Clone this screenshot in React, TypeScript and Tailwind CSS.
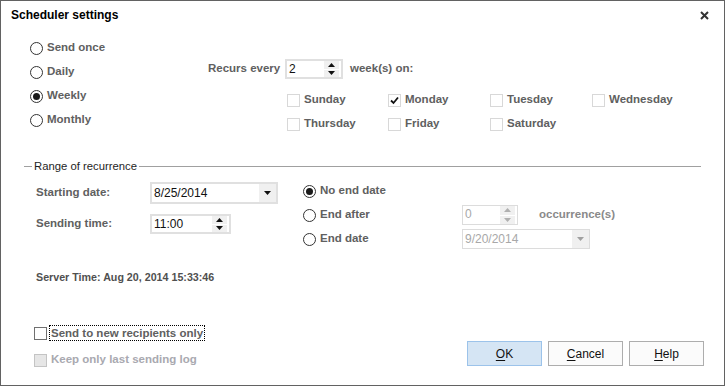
import React from "react";

const label = "font-['Liberation_Sans',Arial,sans-serif] font-bold text-[11.5px] text-[#606060]";

function Radio({ checked, text }: { checked?: boolean; text: string }) {
  return (
    <div className="flex h-[24px] items-center">
      <span className="flex h-[13px] w-[13px] items-center justify-center rounded-full border border-[#333333] bg-white">
        {checked && <span className="h-[7px] w-[7px] rounded-full bg-[#1a1a1a]" />}
      </span>
      <span className={`ml-[4px] ${label}`}>{text}</span>
    </div>
  );
}

function DayBox({ checked, text }: { checked?: boolean; text: string }) {
  return (
    <div className="flex h-[24px] items-center">
      <span className="flex h-[13px] w-[13px] items-center justify-center border border-[#d8d8d8] bg-white">
        {checked && (
          <svg width="9" height="9" viewBox="0 0 9 9">
            <path d="M1 4.5 L3.5 7 L8 1.5" fill="none" stroke="#111" strokeWidth="1.8" />
          </svg>
        )}
      </span>
      <span className={`ml-[4px] ${label}`}>{text}</span>
    </div>
  );
}

function Arrow({ up, color = "#111" }: { up?: boolean; color?: string }) {
  return (
    <svg width="7" height="4" viewBox="0 0 7 4">
      <path d={up ? "M0 4 L3.5 0 L7 4 Z" : "M0 0 L7 0 L3.5 4 Z"} fill={color} />
    </svg>
  );
}

function Spinner({ value, width, disabled }: { value: string; width: string; disabled?: boolean }) {
  return (
    <div
      className={`flex h-[20px] items-stretch bg-white ${width} ${
        disabled ? "border border-[#dcdcdc]" : "border-2 border-[#e0e0e0]"
      }`}
    >
      <span
        className={`flex-1 pl-[2px] font-['Liberation_Sans',Arial,sans-serif] text-[12px] leading-[16px] ${
          disabled ? "text-[#a8a8a8]" : "text-[#111]"
        }`}
      >
        {value}
      </span>
      <div className="mr-[2px] flex w-[15px] flex-col">
        <div className="flex flex-1 items-center justify-center bg-[#f0f0f0]">
          <Arrow up color={disabled ? "#b0b0b0" : "#111"} />
        </div>
        <div className="flex flex-1 items-center justify-center border-t border-white bg-[#f0f0f0]">
          <Arrow color={disabled ? "#b0b0b0" : "#111"} />
        </div>
      </div>
    </div>
  );
}

function Combo({ value, disabled }: { value: string; disabled?: boolean }) {
  return (
    <div
      className={`flex w-[128px] items-stretch bg-white ${
        disabled ? "h-[20px] border border-[#dcdcdc]" : "h-[22px] border-2 border-[#e0e0e0]"
      }`}
    >
      <span
        className={`flex flex-1 items-center pl-[2px] font-['Liberation_Sans',Arial,sans-serif] text-[12px] ${
          disabled ? "text-[#a8a8a8]" : "text-[#111]"
        }`}
      >
        {value}
      </span>
      <div className="flex w-[17px] items-center justify-center bg-[#f0f0f0]">
        <Arrow color={disabled ? "#a0a0a0" : "#111"} />
      </div>
    </div>
  );
}

function Button({ first, rest, primary }: { first: string; rest: string; primary?: boolean }) {
  return (
    <button
      className={`flex h-[25px] w-[75px] items-center justify-center border font-['Liberation_Sans',Arial,sans-serif] text-[12px] text-[#111] ${
        primary ? "border-[#9cc3ea] bg-[#d5e5f4]" : "border-[#adadad] bg-[#fbfbfb]"
      }`}
    >
      <span className="underline underline-offset-2">{first}</span>
      {rest}
    </button>
  );
}

export default function App() {
  return (
    <div className="flex h-[386px] w-[725px] flex-col border border-[#626262] bg-white">
      {/* Title bar */}
      <div className="flex h-[28px] items-center justify-between pl-[10px] pr-[15px]">
        <span className="font-['Liberation_Sans',Arial,sans-serif] text-[12px] font-bold text-black">
          Scheduler settings
        </span>
        <svg width="9" height="9" viewBox="0 0 9 9">
          <path d="M1 1 L8 8 M8 1 L1 8" stroke="#333" strokeWidth="2" />
        </svg>
      </div>

      {/* Recurrence pattern */}
      <div className="mt-[7px] flex pl-[29px]">
        <div className="flex w-[178px] flex-col">
          <Radio text="Send once" />
          <Radio text="Daily" />
          <Radio checked text="Weekly" />
          <Radio text="Monthly" />
        </div>
        <div className="flex flex-col">
          <div className="mt-[21px] flex h-[24px] items-center">
            <span className={`w-[77px] ${label}`}>Recurs every</span>
            <Spinner value="2" width="w-[58px]" />
            <span className={`ml-[7px] ${label}`}>week(s) on:</span>
          </div>
          <div className="ml-[79px] mt-[7px] grid grid-cols-[101px_102px_102px_100px]">
            <DayBox text="Sunday" />
            <DayBox checked text="Monday" />
            <DayBox text="Tuesday" />
            <DayBox text="Wednesday" />
            <DayBox text="Thursday" />
            <DayBox text="Friday" />
            <DayBox text="Saturday" />
          </div>
        </div>
      </div>

      {/* Range of recurrence */}
      <div className="ml-[23px] mr-[23px] mt-[23px] flex h-[14px] items-center">
        <span className="h-px w-[8px] bg-[#a0a0a0]" />
        <span className="px-[2px] font-['Liberation_Sans',Arial,sans-serif] text-[11.3px] text-[#1e1e1e]">
          Range of recurrence
        </span>
        <span className="h-px flex-1 bg-[#a0a0a0]" />
      </div>

      <div className="mt-[6px] flex pl-[35px]">
        <div className="flex w-[267px] flex-col pt-[3px]">
          <div className="flex h-[22px] items-center">
            <span className={`w-[114px] ${label}`}>Starting date:</span>
            <Combo value="8/25/2014" />
          </div>
          <div className="mt-[9px] flex h-[22px] items-center">
            <span className={`w-[114px] ${label}`}>Sending time:</span>
            <Spinner value="11:00" width="w-[81px]" />
          </div>
        </div>
        <div className="flex flex-col">
          <Radio checked text="No end date" />
          <div className="flex h-[24px] items-center">
            <div className="w-[159px]">
              <Radio text="End after" />
            </div>
            <Spinner disabled value="0" width="w-[56px]" />
            <span className="ml-[21px] font-['Liberation_Sans',Arial,sans-serif] text-[11.5px] font-bold text-[#8a8a8a]">
              occurrence(s)
            </span>
          </div>
          <div className="flex h-[24px] items-center">
            <div className="w-[159px]">
              <Radio text="End date" />
            </div>
            <Combo disabled value="9/20/2014" />
          </div>
        </div>
      </div>

      <div className="ml-[35px] mt-[19px] flex h-[14px] items-center">
        <span className="font-['Liberation_Sans',Arial,sans-serif] text-[10.7px] font-bold text-[#505050]">
          Server Time: Aug 20, 2014 15:33:46
        </span>
      </div>

      {/* Bottom */}
      <div className="mt-[40px] flex items-start justify-between pl-[33px] pr-[20px]">
        <div className="mt-[1px] flex flex-col">
          <div className="flex h-[16px] items-center">
            <span className="h-[13px] w-[13px] border border-[#707070] bg-white" />
            <span className={`ml-[2px] border border-dotted border-black px-[1px] leading-[14px] ${label}`}>
              Send to new recipients only
            </span>
          </div>
          <div className="mt-[11px] flex h-[16px] items-center">
            <span className="h-[13px] w-[13px] border border-[#c4c4c4] bg-[#e6e6e6]" />
            <span className="ml-[3px] px-[1px] font-['Liberation_Sans',Arial,sans-serif] text-[11.5px] font-bold text-[#a9a9b0]">
              Keep only last sending log
            </span>
          </div>
        </div>
        <div className="mt-[17px] flex gap-[6px]">
          <Button primary first="O" rest="K" />
          <Button first="C" rest="ancel" />
          <Button first="H" rest="elp" />
        </div>
      </div>
    </div>
  );
}
